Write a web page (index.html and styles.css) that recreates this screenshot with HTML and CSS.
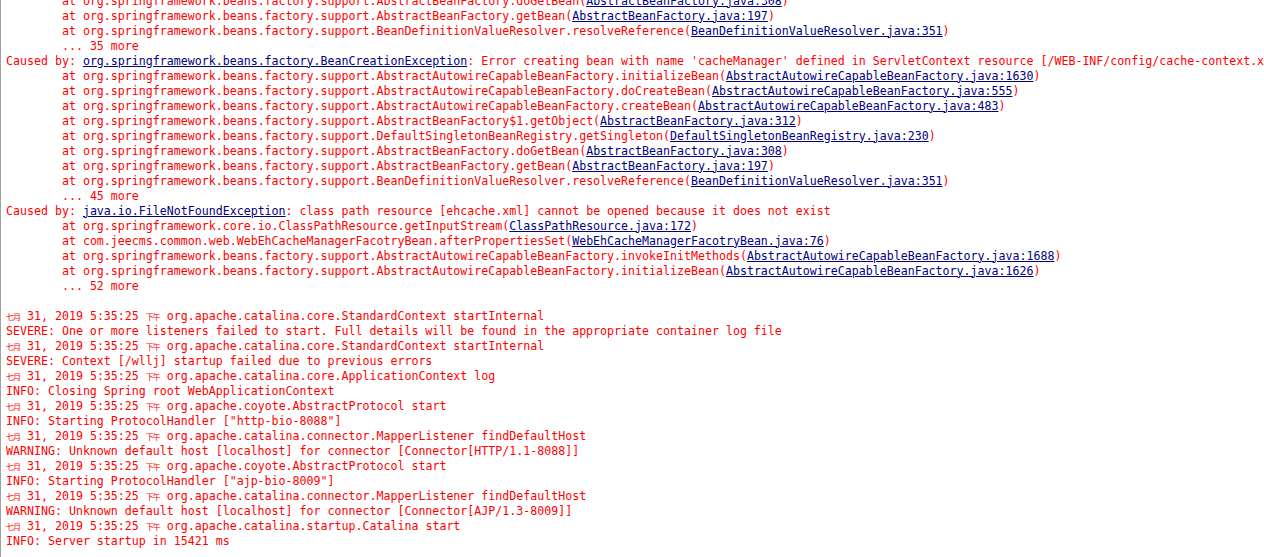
FILE: index.html
```html
<!DOCTYPE html>
<html>
<head>
<meta charset="utf-8">
<link rel="stylesheet" href="styles.css">
</head>
<body>
<div class="console">
<pre class="log">	at org.springframework.beans.factory.support.AbstractBeanFactory.doGetBean(<a class="ln">AbstractBeanFactory.java:308</a>)
	at org.springframework.beans.factory.support.AbstractBeanFactory.getBean(<a class="ln">AbstractBeanFactory.java:197</a>)
	at org.springframework.beans.factory.support.BeanDefinitionValueResolver.resolveReference(<a class="ln">BeanDefinitionValueResolver.java:351</a>)
	... 35 more
Caused by: <a class="ln">org.springframework.beans.factory.BeanCreationException</a>: Error creating bean with name 'cacheManager' defined in ServletContext resource [/WEB-INF/config/cache-context.xml]: Invocation of init method failed
	at org.springframework.beans.factory.support.AbstractAutowireCapableBeanFactory.initializeBean(<a class="ln">AbstractAutowireCapableBeanFactory.java:1630</a>)
	at org.springframework.beans.factory.support.AbstractAutowireCapableBeanFactory.doCreateBean(<a class="ln">AbstractAutowireCapableBeanFactory.java:555</a>)
	at org.springframework.beans.factory.support.AbstractAutowireCapableBeanFactory.createBean(<a class="ln">AbstractAutowireCapableBeanFactory.java:483</a>)
	at org.springframework.beans.factory.support.AbstractBeanFactory$1.getObject(<a class="ln">AbstractBeanFactory.java:312</a>)
	at org.springframework.beans.factory.support.DefaultSingletonBeanRegistry.getSingleton(<a class="ln">DefaultSingletonBeanRegistry.java:230</a>)
	at org.springframework.beans.factory.support.AbstractBeanFactory.doGetBean(<a class="ln">AbstractBeanFactory.java:308</a>)
	at org.springframework.beans.factory.support.AbstractBeanFactory.getBean(<a class="ln">AbstractBeanFactory.java:197</a>)
	at org.springframework.beans.factory.support.BeanDefinitionValueResolver.resolveReference(<a class="ln">BeanDefinitionValueResolver.java:351</a>)
	... 45 more
Caused by: <a class="ln">java.io.FileNotFoundException</a>: class path resource [ehcache.xml] cannot be opened because it does not exist
	at org.springframework.core.io.ClassPathResource.getInputStream(<a class="ln">ClassPathResource.java:172</a>)
	at com.jeecms.common.web.WebEhCacheManagerFacotryBean.afterPropertiesSet(<a class="ln">WebEhCacheManagerFacotryBean.java:76</a>)
	at org.springframework.beans.factory.support.AbstractAutowireCapableBeanFactory.invokeInitMethods(<a class="ln">AbstractAutowireCapableBeanFactory.java:1688</a>)
	at org.springframework.beans.factory.support.AbstractAutowireCapableBeanFactory.initializeBean(<a class="ln">AbstractAutowireCapableBeanFactory.java:1626</a>)
	... 52 more

<span class="cj">七月</span> 31, 2019 5:35:25 <span class="cj">下午</span> org.apache.catalina.core.StandardContext startInternal
SEVERE: One or more listeners failed to start. Full details will be found in the appropriate container log file
<span class="cj">七月</span> 31, 2019 5:35:25 <span class="cj">下午</span> org.apache.catalina.core.StandardContext startInternal
SEVERE: Context [/wllj] startup failed due to previous errors
<span class="cj">七月</span> 31, 2019 5:35:25 <span class="cj">下午</span> org.apache.catalina.core.ApplicationContext log
INFO: Closing Spring root WebApplicationContext
<span class="cj">七月</span> 31, 2019 5:35:25 <span class="cj">下午</span> org.apache.coyote.AbstractProtocol start
INFO: Starting ProtocolHandler ["http-bio-8088"]
<span class="cj">七月</span> 31, 2019 5:35:25 <span class="cj">下午</span> org.apache.catalina.connector.MapperListener findDefaultHost
WARNING: Unknown default host [localhost] for connector [Connector[HTTP/1.1-8088]]
<span class="cj">七月</span> 31, 2019 5:35:25 <span class="cj">下午</span> org.apache.coyote.AbstractProtocol start
INFO: Starting ProtocolHandler ["ajp-bio-8009"]
<span class="cj">七月</span> 31, 2019 5:35:25 <span class="cj">下午</span> org.apache.catalina.connector.MapperListener findDefaultHost
WARNING: Unknown default host [localhost] for connector [Connector[AJP/1.3-8009]]
<span class="cj">七月</span> 31, 2019 5:35:25 <span class="cj">下午</span> org.apache.catalina.startup.Catalina start
INFO: Server startup in 15421 ms
</pre>
</div>
</body>
</html>
```

FILE: styles.css
```css
html, body {
  margin: 0;
  padding: 0;
  background: #ffffff;
  overflow: hidden;
  width: 1264px;
  height: 557px;
}

.console {
  height: 557px;
  border-left: 1px solid #a0a0a0;
  box-sizing: border-box;
  overflow: hidden;
  background: #ffffff;
}

.log {
  margin: -6.5px 0 0 0;
  padding: 0 0 0 5px;
  font-family: "DejaVu Sans Mono", "Liberation Mono", monospace;
  font-size: 11.627px;
  line-height: 15px;
  color: #ff0000;
  white-space: pre;
  tab-size: 8;
  -moz-tab-size: 8;
}

.ln {
  color: #000080;
  text-decoration: underline;
  text-decoration-color: #000080;
}

.cj {
  font-family: "Noto Sans CJK SC", sans-serif;
  font-size: 8px;
  letter-spacing: -1px;
  line-height: 1;
}
```
